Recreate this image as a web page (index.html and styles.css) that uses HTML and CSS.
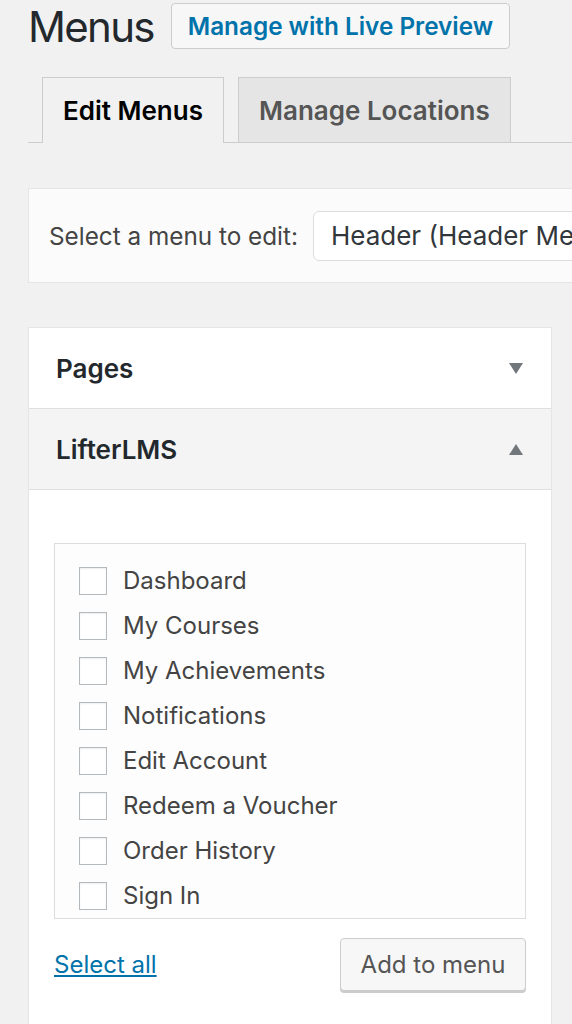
FILE: index.html
```html
<!DOCTYPE html>
<html lang="en">
<head>
    <meta charset="UTF-8">
    <meta name="viewport" content="width=device-width, initial-scale=1.0">
    <title>Menus</title>
    <link rel="stylesheet" href="styles.css">
</head>
<body>
    <div class="wrap">
        <div class="page-head">
            <h1>Menus</h1>
            <a class="head-button" href="#">Manage with Live Preview</a>
        </div>

        <div class="nav-tabs">
            <a class="nav-tab active" href="#">Edit Menus</a>
            <a class="nav-tab" href="#">Manage Locations</a>
        </div>

        <div class="manage-menus">
            <label for="menuSelect">Select a menu to edit:</label>
            <div class="menu-select" id="menuSelect">Header (Header Menu)</div>
        </div>

        <div class="accordion">
            <div class="accordion-title">
                <span>Pages</span>
                <span class="arrow down"></span>
            </div>
            <div class="accordion-title open">
                <span>LifterLMS</span>
                <span class="arrow up"></span>
            </div>
            <div class="accordion-content">
                <ul class="checklist">
                    <li><span class="check"></span>Dashboard</li>
                    <li><span class="check"></span>My Courses</li>
                    <li><span class="check"></span>My Achievements</li>
                    <li><span class="check"></span>Notifications</li>
                    <li><span class="check"></span>Edit Account</li>
                    <li><span class="check"></span>Redeem a Voucher</li>
                    <li><span class="check"></span>Order History</li>
                    <li><span class="check"></span>Sign In</li>
                </ul>
                <div class="button-controls">
                    <a class="select-all" href="#">Select all</a>
                    <button class="add-button" type="button">Add to menu</button>
                </div>
            </div>
        </div>
    </div>
</body>
</html>
```

FILE: styles.css
```css
body {
    font-family: Inter, "Open Sans", sans-serif;
    margin: 0;
    padding: 0;
    background-color: #f1f1f1;
    color: #444;
    overflow: hidden;
}
.wrap {
    padding-left: 28px;
    width: 800px;
}
.page-head {
    display: flex;
    align-items: center;
    gap: 17px;
    height: 52px;
}
h1 {
    margin: 0;
    font-size: 42px;
    font-weight: 400;
    letter-spacing: -1.7px;
    color: #23282d;
}
.head-button {
    display: flex;
    align-items: center;
    height: 44px;
    padding: 0 16px;
    border: 1px solid #ccc;
    border-radius: 4px;
    background: #f7f7f7;
    color: #0073aa;
    font-size: 24.3px;
    font-weight: 600;
    text-decoration: none;
}
.nav-tabs {
    display: flex;
    gap: 14px;
    margin-top: 25px;
    padding-left: 14px;
    border-bottom: 1px solid #ccc;
}
.nav-tab {
    display: flex;
    align-items: center;
    height: 64px;
    padding: 0 20px;
    border: 1px solid #ccc;
    border-bottom: none;
    background: #e5e5e5;
    color: #555;
    font-size: 26px;
    font-weight: 600;
    text-decoration: none;
}
.nav-tab.active {
    background: #f1f1f1;
    color: #000;
    margin-bottom: -1px;
    height: 65px;
}
.manage-menus {
    display: flex;
    align-items: center;
    gap: 15px;
    margin-top: 45px;
    height: 93px;
    padding-left: 20px;
    border: 1px solid #e5e5e5;
    background: #fbfbfb;
    font-size: 24.3px;
}
.menu-select {
    display: flex;
    align-items: center;
    height: 48px;
    width: 400px;
    padding-left: 17px;
    border: 1px solid #ddd;
    border-radius: 6px;
    background: #fff;
    color: #32373c;
    font-size: 26px;
}
.accordion {
    width: 522px;
    margin-top: 44px;
    border: 1px solid #e5e5e5;
    background: #fff;
    box-shadow: 0 1px 1px rgba(0, 0, 0, 0.04);
}
.accordion-title {
    display: flex;
    align-items: center;
    justify-content: space-between;
    height: 80px;
    padding: 0 28px 0 27px;
    border-bottom: 1px solid #dfdfdf;
    color: #23282d;
    font-size: 26px;
    font-weight: 600;
}
.accordion-title.open {
    background: #f4f4f4;
}
.arrow {
    width: 0;
    height: 0;
    border-left: 7px solid transparent;
    border-right: 7px solid transparent;
}
.arrow.down {
    border-top: 11px solid #72777c;
}
.arrow.up {
    border-bottom: 11px solid #72777c;
}
.accordion-content {
    padding: 53px 25px 40px 25px;
}
.checklist {
    list-style: none;
    margin: 0;
    padding: 14px 0 0 24px;
    border: 1px solid #ddd;
    background: #fdfdfd;
}
.checklist li {
    display: flex;
    align-items: center;
    gap: 16px;
    height: 45px;
    font-size: 24px;
    color: #444;
}
.check {
    width: 26px;
    height: 26px;
    border: 1px solid #b4b9be;
    background: #fff;
    box-shadow: inset 0 1px 2px rgba(0, 0, 0, 0.07);
}
.button-controls {
    display: flex;
    align-items: center;
    justify-content: space-between;
    margin-top: 19px;
}
.select-all {
    color: #0073aa;
    font-size: 24px;
}
.add-button {
    height: 53px;
    width: 186px;
    border: 1px solid #ccc;
    border-radius: 4px;
    background: #f7f7f7;
    box-shadow: 0 2px 0 #ccc;
    color: #555;
    font-family: inherit;
    font-size: 24px;
}
```
